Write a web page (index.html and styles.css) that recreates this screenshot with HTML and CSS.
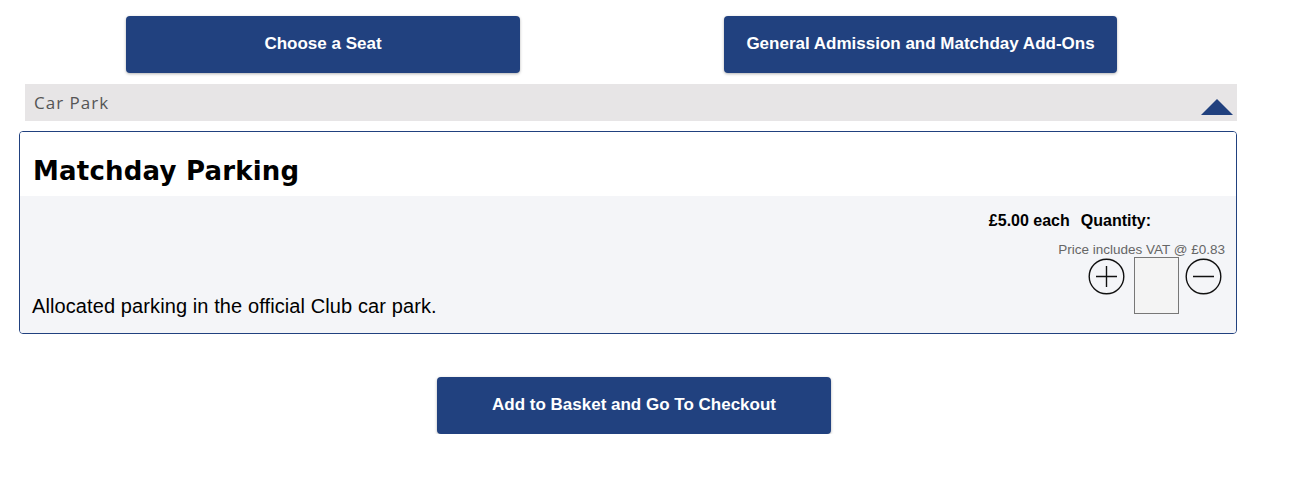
FILE: index.html
```html
<!DOCTYPE html>
<html lang="en">
<head>
<meta charset="utf-8">
<title>Car Park</title>
<link rel="stylesheet" href="styles.css">
</head>
<body>
<div class="page">
  <div class="top-row">
    <button class="btn">Choose a Seat</button>
    <button class="btn btn-second">General Admission and Matchday Add-Ons</button>
  </div>
  <div class="section-bar">
    <span class="section-title">Car Park</span>
    <span class="caret"></span>
  </div>
  <div class="card">
    <div class="card-head">
      <h2 class="card-title">Matchday Parking</h2>
    </div>
    <div class="card-body">
      <p class="desc">Allocated parking in the official Club car park.</p>
      <div class="buy">
        <div class="price-line"><span class="price">£5.00 each</span><span class="qty-label">Quantity:</span></div>
        <div class="vat">Price includes VAT @ £0.83</div>
        <div class="qty">
          <button class="round" aria-label="Add">
            <svg width="37" height="37" viewBox="0 0 37 37"><circle cx="18.5" cy="18.5" r="17.3" fill="none" stroke="#111" stroke-width="1.4"/><path d="M8 18.5H29M18.5 8V29" stroke="#111" stroke-width="1.4"/></svg>
          </button>
          <input class="qty-input" type="text" value="">
          <button class="round" aria-label="Remove">
            <svg width="37" height="37" viewBox="0 0 37 37"><circle cx="18.5" cy="18.5" r="17.3" fill="none" stroke="#111" stroke-width="1.4"/><path d="M8 18.5H29" stroke="#111" stroke-width="1.4"/></svg>
          </button>
        </div>
      </div>
    </div>
  </div>
  <div class="bottom-row">
    <button class="btn">Add to Basket and Go To Checkout</button>
  </div>
</div>
</body>
</html>
```
FILE: styles.css
```css
* { box-sizing: border-box; }
body {
  margin: 0;
  font-family: "Liberation Sans", Arial, sans-serif;
  color: #000;
  background: #fff;
}
.page { padding-top: 16px; }
.top-row {
  display: flex;
  gap: 204px;
  padding-left: 126px;
}
.btn {
  width: 394px;
  height: 57px;
  border: none;
  border-radius: 4px;
  background: #21417f;
  color: #fff;
  font-family: "Liberation Sans", Arial, sans-serif;
  font-weight: bold;
  font-size: 17px;
  padding: 0 0 2px;
  box-shadow: 0 1px 3px rgba(0,0,0,0.3);
  cursor: pointer;
}
.btn-second { width: 393px; }
.section-bar {
  margin: 11px 0 0 25px;
  width: 1212px;
  height: 37px;
  background: #e7e5e6;
  display: flex;
  justify-content: space-between;
  align-items: flex-start;
  padding: 7px 4px 0 9px;
}
.section-title {
  font-family: "Open Sans", sans-serif;
  font-size: 17px;
  color: #555;
  letter-spacing: 1px;
}
.caret {
  margin-top: 8px;
  width: 0;
  height: 0;
  border-left: 16px solid transparent;
  border-right: 16px solid transparent;
  border-bottom: 16px solid #21417f;
}
.card {
  margin: 10px 0 0 19px;
  width: 1218px;
  border: 1px solid #21417f;
  border-radius: 4px;
  overflow: hidden;
}
.card-head {
  background: #fff;
  height: 64px;
  padding: 24px 13px 0;
}
.card-title {
  margin: 0;
  font-family: "DejaVu Sans", sans-serif;
  font-weight: bold;
  font-size: 26px;
  letter-spacing: 0.2px;
  color: #000;
}
.card-body {
  background: #f4f5f8;
  height: 137px;
  display: flex;
  justify-content: space-between;
  align-items: flex-end;
  padding: 0 11px 19px 12px;
}
.desc {
  margin: 0 0 -4px;
  font-size: 20px;
  line-height: 24px;
  letter-spacing: 0.1px;
}
.buy {
  display: flex;
  flex-direction: column;
  align-items: flex-end;
}
.price-line {
  display: flex;
  gap: 11px;
  font-weight: bold;
  font-size: 16px;
  margin-right: 74px;
  margin-bottom: 12px;
}
.vat {
  font-size: 13.5px;
  color: #666;
  line-height: 15px;
}
.qty {
  display: flex;
  align-items: flex-start;
  margin-right: 3px;
}
.round {
  background: none;
  border: none;
  padding: 0;
  width: 37px;
  height: 37px;
  margin-top: 1px;
  display: block;
}
.round svg { display: block; }
.qty-input {
  width: 45px;
  height: 57px;
  border: 1px solid #777;
  background: #f4f4f4;
  margin: 0 6px 0 9px;
}
.bottom-row {
  padding: 43px 0 0 437px;
}
```
